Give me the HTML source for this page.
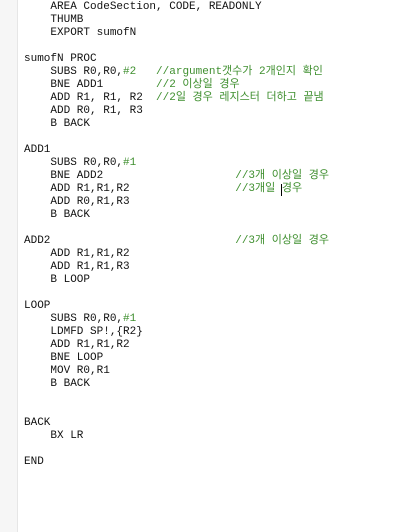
<!DOCTYPE html>
<html><head><meta charset="utf-8"><style>
html,body{margin:0;padding:0;width:417px;height:532px;overflow:hidden;background:#fff}
.g{position:absolute;left:0;top:0;width:17px;height:532px;background:#f6f6f6;border-right:1px solid #e6e6e6}
.p{position:absolute;left:24px;top:1px;margin:0;font:11px/13px "Liberation Mono","Noto Sans CJK KR",monospace;color:#111}
.p div{height:13px;white-space:pre;overflow:visible;position:relative}
.c{color:#3f8f2f}
.cur{position:absolute;left:257px;top:1px;width:1px;height:12px;background:#000}
</style></head><body><div class="g"></div>
<div class="p">
<div>    AREA CodeSection, CODE, READONLY</div>
<div>    THUMB</div>
<div>    EXPORT sumofN</div>
<div> </div>
<div>sumofN PROC</div>
<div>    SUBS R0,R0,<span class="c">#2</span>   <span class="c">//argument갯수가 2개인지 확인</span></div>
<div>    BNE ADD1        <span class="c">//2 이상일 경우</span></div>
<div>    ADD R1, R1, R2  <span class="c">//2일 경우 레지스터 더하고 끝냄</span></div>
<div>    ADD R0, R1, R3</div>
<div>    B BACK</div>
<div> </div>
<div>ADD1</div>
<div>    SUBS R0,R0,<span class="c">#1</span></div>
<div>    BNE ADD2                    <span class="c">//3개 이상일 경우</span></div>
<div>    ADD R1,R1,R2                <span class="c">//3개일 경우</span><i class="cur"></i></div>
<div>    ADD R0,R1,R3</div>
<div>    B BACK</div>
<div> </div>
<div>ADD2                            <span class="c">//3개 이상일 경우</span></div>
<div>    ADD R1,R1,R2</div>
<div>    ADD R1,R1,R3</div>
<div>    B LOOP</div>
<div> </div>
<div>LOOP</div>
<div>    SUBS R0,R0,<span class="c">#1</span></div>
<div>    LDMFD SP!,{R2}</div>
<div>    ADD R1,R1,R2</div>
<div>    BNE LOOP</div>
<div>    MOV R0,R1</div>
<div>    B BACK</div>
<div> </div>
<div> </div>
<div>BACK</div>
<div>    BX LR</div>
<div> </div>
<div>END</div>
</div>
</body></html>
